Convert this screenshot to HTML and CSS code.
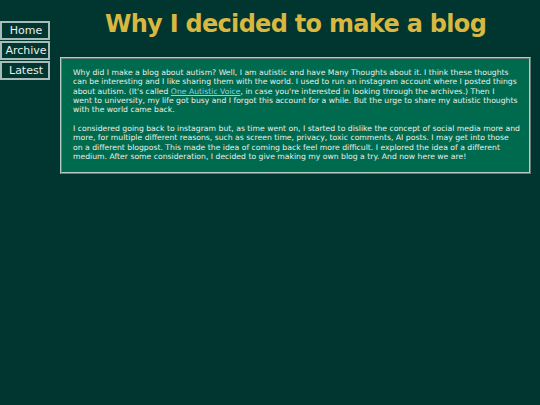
FILE: index.html
```html
<!DOCTYPE html>
<html>
<head>
<meta charset="utf-8">
<link rel="stylesheet" href="styles.css">
</head>
<body>
<div class="page">
  <nav class="nav">
    <a class="navbtn" href="#">Home</a>
    <a class="navbtn" href="#">Archive</a>
    <a class="navbtn" href="#">Latest</a>
  </nav>
  <main class="main">
    <h1 class="title">Why I decided to make a blog</h1>
    <div class="post">
      <p>Why did I make a blog about autism? Well, I am autistic and have Many Thoughts about it. I think these thoughts<br>can be interesting and I like sharing them with the world. I used to run an instagram account where I posted things<br>about autism. (It's called <a class="link" href="#">One Autistic Voice</a>, in case you're interested in looking through the archives.) Then I<br>went to university, my life got busy and I forgot this account for a while. But the urge to share my autistic thoughts<br>with the world came back.</p>
      <p>I considered going back to instagram but, as time went on, I started to dislike the concept of social media more and<br>more, for multiple different reasons, such as screen time, privacy, toxic comments, AI posts. I may get into those<br>on a different blogpost. This made the idea of coming back feel more difficult. I explored the idea of a different<br>medium. After some consideration, I decided to give making my own blog a try. And now here we are!</p>
    </div>
  </main>
</div>
</body>
</html>
```
FILE: styles.css
```css
html, body {
  margin: 0;
  padding: 0;
  background: #003530;
  font-family: "DejaVu Sans", Verdana, sans-serif;
  color: #e8f0e8;
}
.page {
  display: flex;
  align-items: flex-start;
}
.nav {
  display: flex;
  flex-direction: column;
  gap: 1px;
  width: 50px;
  margin-top: 21px;
}
.navbtn {
  display: block;
  box-sizing: border-box;
  height: 19px;
  border: 2px solid #a8bcb8;
  color: #e8f0e8;
  text-decoration: none;
  font-size: 11px;
  line-height: 15px;
  text-align: center;
  padding-left: 2px;
  background: #003530;
}
.main {
  margin-left: 10px;
  width: 471px;
}
.title {
  margin: 10px 0 0 0;
  height: 47px;
  text-align: center;
  font-size: 24px;
  letter-spacing: -0.7px;
  line-height: 28px;
  color: #d8b840;
  font-weight: bold;
}
.post {
  box-sizing: border-box;
  border: 2px ridge #b8ccc4;
  background: #006a4f;
  padding: 9px 10px 11px 11px;
  font-size: 7.7px;
  line-height: 9.33px;
}
.post p {
  margin: 0 0 9.33px 0;
  white-space: nowrap;
}
.post p:last-child {
  margin-bottom: 0;
}
.link {
  color: #90d0e0;
}
```
